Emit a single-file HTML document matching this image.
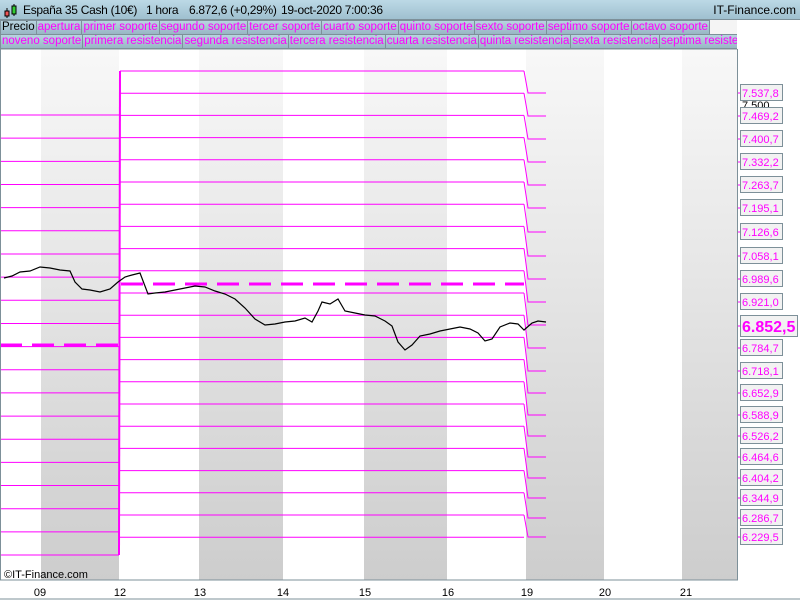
<!DOCTYPE html>
<html><head><meta charset="utf-8"><style>
body{margin:0;width:800px;height:600px;overflow:hidden;background:#fff;font-family:"Liberation Sans",sans-serif}
#hdr{position:absolute;left:0;top:0;width:800px;height:19px;background:linear-gradient(#bcd9e6,#9fc0cf);border-bottom:1px solid #7d9099;font-size:12px}
.row{position:absolute;left:0;height:15px;width:737px;background:#f4f4f4;font-size:11.5px;white-space:nowrap;overflow:hidden}
.row span{display:inline-block;height:13px;line-height:13px;padding:0 1px;background:linear-gradient(#b8d4e0,#98b6c4);border:1px solid #7d9099;color:#f0f;margin-right:-1px}
#hdr b{font-weight:normal;position:absolute;top:3px;letter-spacing:-0.3px;white-space:nowrap}
</style></head><body>
<div id="hdr">
<svg style="position:absolute;left:2px;top:2px" width="16" height="16"><line x1="5" y1="6" x2="5" y2="16" stroke="#000"/><rect x="3" y="9" width="4" height="5" fill="#e55" stroke="#000"/><line x1="12" y1="2" x2="12" y2="14" stroke="#000"/><rect x="10" y="4" width="4" height="8" fill="#3c3" stroke="#000"/></svg>
<b style="left:23px">España 35 Cash (10€)</b><b style="left:146px">1 hora</b><b style="left:189px">6.872,6 (+0,29%)</b><b style="left:281px">19-oct-2020 7:00:36</b>
<span style="position:absolute;right:4px;top:3px">IT-Finance.com</span>
</div>
<div class="row" style="top:20px"><span style="color:#000">Precio</span><span>apertura</span><span>primer soporte</span><span>segundo soporte</span><span>tercer soporte</span><span>cuarto soporte</span><span>quinto soporte</span><span>sexto soporte</span><span>septimo soporte</span><span>octavo soporte</span></div>
<div class="row" style="top:34px"><span>noveno soporte</span><span>primera resistencia</span><span>segunda resistencia</span><span>tercera resistencia</span><span>cuarta resistencia</span><span>quinta resistencia</span><span>sexta resistencia</span><span>septima resistencia</span></div>
<svg style="position:absolute;left:0;top:49px" width="800" height="551">
<defs><linearGradient id="g" x1="0" y1="0" x2="0" y2="1"><stop offset="0" stop-color="#f8f8f8"/><stop offset="1" stop-color="#cdcdcd"/></linearGradient></defs>
<g fill="url(#g)"><rect x="41" y="0" width="78" height="531"/><rect x="199" y="0" width="84" height="531"/><rect x="364" y="0" width="83" height="531"/><rect x="526" y="0" width="78" height="531"/><rect x="682" y="0" width="55" height="531"/></g>
<g id="lines" stroke="#f0f" stroke-width="1" fill="none"></g>
<line x1="0" y1="296" x2="119" y2="296" stroke="#f0f" stroke-width="3" stroke-dasharray="22,10"/>
<line x1="121" y1="235" x2="524" y2="235" stroke="#f0f" stroke-width="3" stroke-dasharray="22,10"/>
<polyline fill="none" stroke="#000" stroke-width="1.2" points="4,229 12,227 20,223 30,222 40,218 50,219 60,221 70,222 75,233 82,240 90,241 100,243 110,240 118,233 125,228 132,226 140,224 148,245 155,244 165,243 175,241 185,239 195,237 205,238 215,242 225,245 235,250 245,259 255,270 265,276 275,275 285,273 295,272 305,269 312,273 318,262 322,253 330,255 338,250 345,262 355,264 365,266 375,267 385,272 392,277 398,293 405,301 412,296 420,287 430,285 440,282 450,280 460,278 470,280 478,284 485,292 492,290 500,278 510,274 518,275 524,281 532,274 538,272 546,273"/>
<g id="lab"></g>
<rect x="0.5" y="0" width="737" height="531" fill="none" stroke="#7d9099"/>
<line x1="0" y1="550" x2="800" y2="550" stroke="#7d9099"/>
<text x="4" y="529" font-size="11" font-family="Liberation Sans">©IT-Finance.com</text>
<g font-size="11" font-family="Liberation Sans" text-anchor="middle"><text x="40" y="547">09</text><text x="120" y="547">12</text><text x="200" y="547">13</text><text x="283" y="547">14</text><text x="365" y="547">15</text><text x="448" y="547">16</text><text x="527" y="547">19</text><text x="605" y="547">20</text><text x="686" y="547">21</text></g>
</svg>
<script>
var L=document.getElementById('lines'),s='';
for(var i=0;i<20;i++){var y=66+i*23.16;s+='<line x1="0" y1="'+y+'" x2="119" y2="'+y+'"/>';}
s+='<line x1="119" y1="506" x2="120" y2="22" stroke-width="2"/>';
var mid=[];for(var i=0;i<22;i++){var y=22+i*22.2;mid.push(y);s+='<line x1="120" y1="'+y+'" x2="524" y2="'+y+'"/>';}
var rt=[44,67,90,113,136,159,183,207,230,253,276,299,322,344,366,387,408,429,449,469,488];
for(var i=0;i<21;i++){s+='<polyline points="524,'+mid[i]+' 528,'+rt[i]+' 546,'+rt[i]+'"/>';}
L.innerHTML=s;
var v=['7.537,8','7.469,2','7.400,7','7.332,2','7.263,7','7.195,1','7.126,6','7.058,1','6.989,6','6.921,0',null,'6.784,7','6.718,1','6.652,9','6.588,9','6.526,2','6.464,6','6.404,2','6.344,9','6.286,7','6.229,5'];
var t='<text x="742" y="60" font-size="11" fill="#000">7.500</text>';
for(var i=0;i<21;i++){if(!v[i])continue;var y=rt[i];t+='<line x1="737" y1="'+y+'" x2="741" y2="'+y+'" stroke="#f0f"/><rect x="740.5" y="'+(y-8.5)+'" width="42" height="16" fill="#f2f2f2" stroke="#7d9099"/><text x="742" y="'+(y+4)+'" font-size="11" fill="#f0f" font-family="Liberation Sans">'+v[i]+'</text>';}
t+='<line x1="737" y1="277" x2="741" y2="277" stroke="#f0f"/><rect x="740.5" y="266.5" width="57" height="21" fill="#f2f2f2" stroke="#7d9099"/><text x="742" y="283" font-size="16" font-weight="bold" fill="#f0f" font-family="Liberation Sans">6.852,5</text>';
document.getElementById('lab').innerHTML=t;
</script>
</body></html>
